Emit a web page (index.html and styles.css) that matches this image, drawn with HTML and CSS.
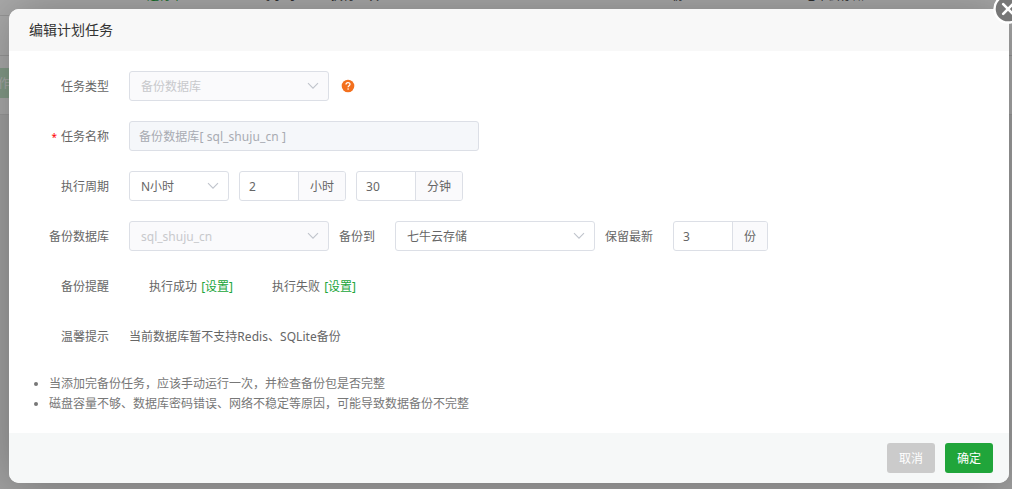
FILE: index.html
```html
<!DOCTYPE html>
<html lang="zh-CN">
<head>
<meta charset="utf-8">
<title>编辑计划任务</title>
<link rel="stylesheet" href="styles.css">
</head>
<body>
<div class="page">
  <div class="page-head">
    <span class="cell cell-a">运行中</span>
    <span class="cell cell-b">每小时</span>
    <span class="cell cell-c">执行一次</span>
    <span class="cell cell-d">份</span>
    <span class="cell cell-e">七牛云存储</span>
  </div>
  <div class="page-row"></div>
  <div class="page-actions"><span class="page-btn">作</span></div>
</div>
<div class="mask"></div>
<div class="dialog">
  <button class="close" aria-label="关闭"><svg width="30" height="30" viewBox="0 0 30 30"><circle cx="15" cy="15" r="13.5" fill="#777" stroke="#fff" stroke-width="2.4"/><path d="M10.2 10.2l9.6 9.6M19.8 10.2l-9.6 9.6" stroke="#fff" stroke-width="2.6" stroke-linecap="round"/></svg></button>
  <header class="title">编辑计划任务</header>
  <main class="body">
    <div class="row">
      <label class="label">任务类型</label>
      <div class="select w200 disabled"><span>备份数据库</span><svg class="arrow" viewBox="0 0 12 8"><path d="M1 1.2l5 5 5-5"/></svg></div>
      <svg class="help" width="14" height="14" viewBox="0 0 14 14"><circle cx="7" cy="7" r="6.3" fill="#f3701e"/><path d="M5 5.6c0-2.6 4-2.5 4-.3 0 1.4-1.9 1.5-1.9 2.9" fill="none" stroke="#fff" stroke-width="1.3"/><circle cx="7.1" cy="10" r=".8" fill="#fff"/></svg>
    </div>
    <div class="row">
      <label class="label"><i class="req">*</i>任务名称</label>
      <div class="input w350 locked"><span>备份数据库[ sql_shuju_cn ]</span></div>
    </div>
    <div class="row">
      <label class="label">执行周期</label>
      <div class="select w100"><span>N小时</span><svg class="arrow" viewBox="0 0 12 8"><path d="M1 1.2l5 5 5-5"/></svg></div>
      <div class="group"><div class="num">2</div><div class="unit">小时</div></div>
      <div class="group"><div class="num">30</div><div class="unit">分钟</div></div>
    </div>
    <div class="row">
      <label class="label">备份数据库</label>
      <div class="select w200 disabled"><span>sql_shuju_cn</span><svg class="arrow" viewBox="0 0 12 8"><path d="M1 1.2l5 5 5-5"/></svg></div>
      <span class="inline-label">备份到</span>
      <div class="select w200"><span>七牛云存储</span><svg class="arrow" viewBox="0 0 12 8"><path d="M1 1.2l5 5 5-5"/></svg></div>
      <span class="inline-label keep">保留最新</span>
      <div class="group"><div class="num">3</div><div class="unit">份</div></div>
    </div>
    <div class="row">
      <label class="label">备份提醒</label>
      <div class="alerts"><span>执行成功 <a class="link">[设置]</a></span><span>执行失败 <a class="link">[设置]</a></span></div>
    </div>
    <div class="row">
      <label class="label">温馨提示</label>
      <span class="hint">当前数据库暂不支持Redis、SQLite备份</span>
    </div>
    <ul class="notes">
      <li>当添加完备份任务，应该手动运行一次，并检查备份包是否完整</li>
      <li>磁盘容量不够、数据库密码错误、网络不稳定等原因，可能导致数据备份不完整</li>
    </ul>
  </main>
  <footer class="foot">
    <button class="btn cancel">取消</button>
    <button class="btn confirm">确定</button>
  </footer>
</div>
</body>
</html>
```
FILE: styles.css
```css
* { box-sizing: border-box; }
body {
  margin: 0;
  width: 1012px;
  height: 489px;
  overflow: hidden;
  position: relative;
  background: #f1f1f1;
  color: #666;
  font: 12px/20px "Noto Sans", "Noto Sans CJK SC", sans-serif;
}
.page { height: 115px; background: #fff; border-bottom: 1px solid #e6e6e6; }
.page-head { position: relative; height: 16px; border-bottom: 1px solid #e3e3e3; }
.cell { position: absolute; top: -14px; line-height: 20px; color: #444; }
.cell-a { left: 147px; color: #20a53a; }
.cell-b { left: 260px; }
.cell-c { left: 331px; }
.cell-d { left: 672px; }
.cell-e { left: 804px; }
.page-row { height: 40px; border-bottom: 1px solid #e3e3e3; }
.page-actions { padding-top: 12px; }
.page-btn { display: flex; justify-content: flex-end; width: 12px; height: 30px; line-height: 32px; padding-right: 2px; background: #c6e9cd; color: #fff; }
.mask { position: absolute; inset: 0; background: rgba(0, 0, 0, .33); }
.dialog {
  position: absolute;
  left: 9px;
  top: 9px;
  width: 1000px;
  height: 474px;
  display: flex;
  flex-direction: column;
  background: #fff;
  border-radius: 10px;
  box-shadow: 1px 1px 50px rgba(0, 0, 0, .3);
}
.close { position: absolute; right: -14px; top: -15px; width: 30px; height: 30px; padding: 0; border: 0; background: none; }
.close svg { display: block; }
.title { height: 42px; line-height: 42px; padding-left: 20px; background: #f8f8f8; border-radius: 10px 10px 0 0; color: #333; font-size: 14px; }
.body { flex: 1; padding-top: 20px; }
.row { display: flex; align-items: center; height: 30px; margin-bottom: 20px; gap: 10px; }
.label { width: 100px; margin-right: 10px; padding-top: 2px; text-align: right; white-space: nowrap; }
.req { color: #f00; font-size: 10px; font-style: normal; margin-right: 4px; }
.select, .input { display: flex; align-items: center; justify-content: space-between; height: 30px; border: 1px solid #dcdfe6; border-radius: 3px; }
.select { padding: 0 9px 0 11px; }
.input { padding: 0 9px; }
.select span, .input span { padding-top: 2px; }
.input span { letter-spacing: .08px; }
.w100 { width: 100px; }
.w200 { width: 200px; }
.w350 { width: 350px; }
.disabled { background: #fafafc; color: #c8c9cc; }
.locked { background: #f5f7fa; color: #a8abb2; }
.arrow { width: 12px; height: 8px; fill: none; stroke: #c0c4cc; stroke-width: 1.1; }
.help { margin-left: 2px; }
.group { display: flex; height: 30px; border: 1px solid #dcdfe6; border-radius: 3px; line-height: 30px; overflow: hidden; }
.num { width: 58px; padding-left: 9px; }
.unit { padding: 0 11px; border-left: 1px solid #dcdfe6; background: #fafafc; }
.inline-label { width: 46px; padding-top: 2px; white-space: nowrap; }
.keep { width: 58px; }
.alerts { display: flex; gap: 39px; padding: 2px 0 0 20px; }
.link { margin-left: 1px; color: #20a53a; }
.hint { padding-top: 2px; letter-spacing: .04px; }
.notes { margin: 23px 0 0; padding-left: 40px; color: #777; }
.foot { display: flex; justify-content: flex-end; gap: 10px; height: 50px; padding: 10px 16px; background: #f6f8f8; border-radius: 0 0 10px 10px; }
.btn { width: 48px; height: 30px; padding: 2px 0 0; border: 0; border-radius: 3px; color: #fff; font: inherit; }
.cancel { background: #cbcbcb; }
.confirm { background: #20a53a; }
```
